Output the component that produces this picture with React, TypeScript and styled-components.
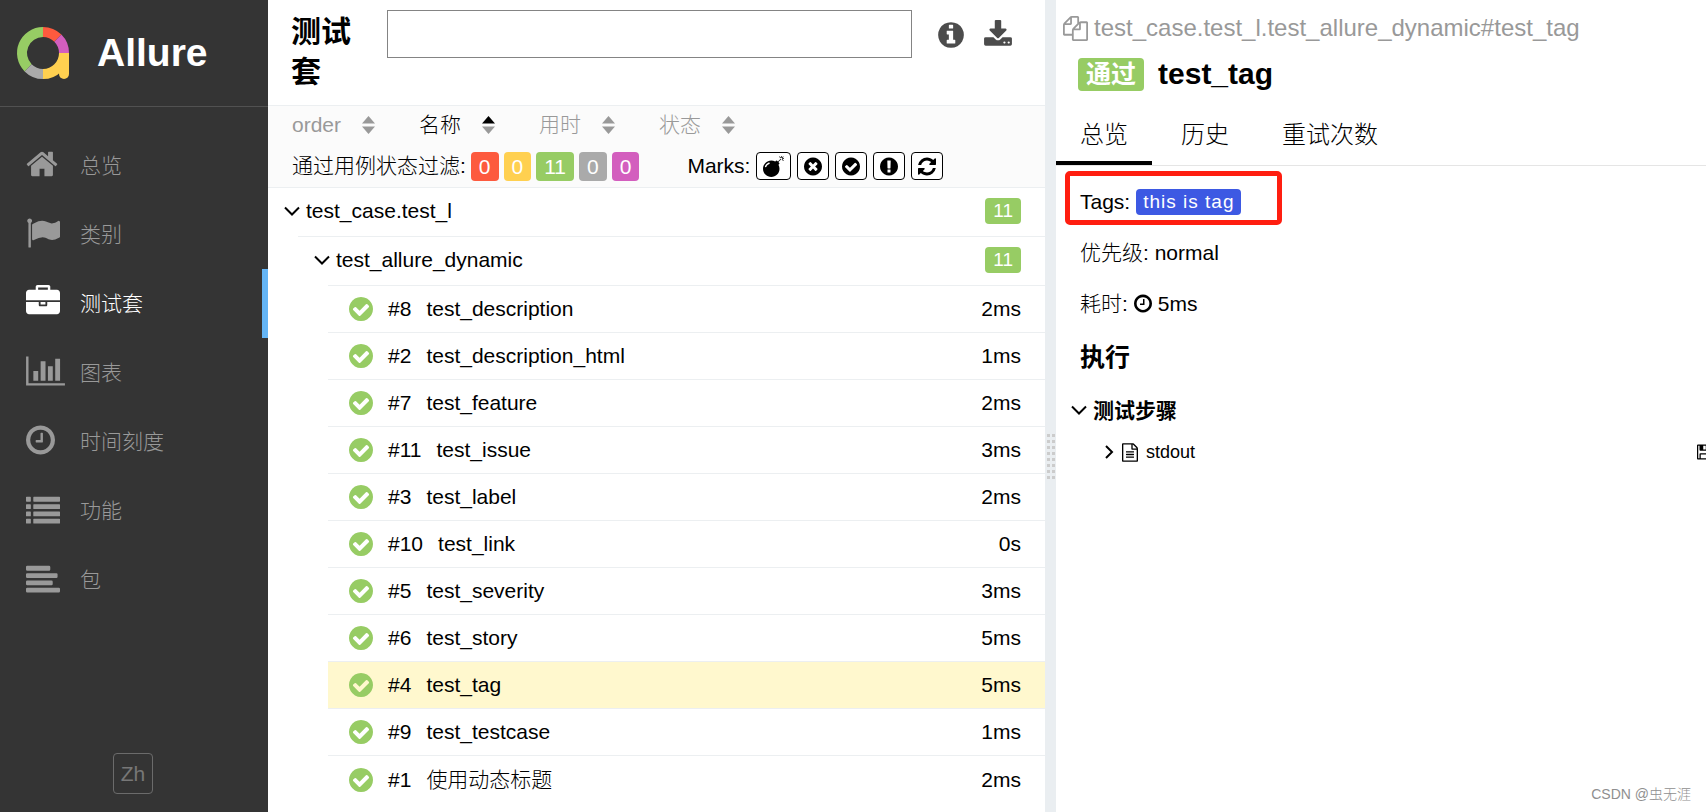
import React, { useState } from "react";
import styled, { createGlobalStyle, css } from "styled-components";

const FONT = '"Liberation Sans", Arial, "Noto Sans CJK SC", sans-serif';

const color = {
  failed: "#fd5a3e",
  broken: "#ffd050",
  passed: "#97cc64",
  skipped: "#aaaaaa",
  unknown: "#d35ebe",
  line: "#eceff1",
  muted: "#999999",
};

const GlobalStyle = createGlobalStyle`
  *, *::before, *::after { box-sizing: border-box; }
  body { margin: 0; font-family: ${FONT}; font-size: 21px; font-weight: 300; line-height: 32px; color: #000; background: #fff; }
  h1, h2, h3, p, ul { margin: 0; padding: 0; }
  ul { list-style: none; }
  a { color: inherit; text-decoration: none; }
  button { font: inherit; color: inherit; background: none; border: 0; padding: 0; cursor: pointer; }
`;

/* ---------- icons ---------- */

const DISC =
  "M1664 896q0 209-103 385.5t-279.5 279.5-385.5 103-385.5-103-279.5-279.5-103-385.5 103-385.5 279.5-279.5 385.5-103 385.5 103 279.5 279.5 103 385.5z";

type IconName =
  | "home" | "flag" | "briefcase" | "chart" | "clock" | "list" | "align"
  | "check" | "times" | "exclamation" | "info" | "download" | "refresh"
  | "bomb" | "files" | "fileText" | "floppy";

/* Each glyph: left edge and width of its box on a 1792-unit em, then the outline. */
const glyphs: Record<IconName, [number, number, string]> = {
  home: [64, 1664, "M1472 992v480q0 26-19 45t-45 19h-384v-384h-256v384h-384q-26 0-45-19t-19-45v-480q0-1 .5-3t.5-3l575-474 575 474q1 2 1 6zm223-69l-62 74q-8 9-21 11h-3q-13 0-21-7l-692-577-692 577q-12 8-24 7-13-2-21-11l-62-74q-8-10-7-23.5t11-21.5l719-599q32-26 76-26t76 26l244 204v-195q0-14 9-23t23-9h192q14 0 23 9t9 23v408l219 182q10 8 11 21.5t-7 23.5z"],
  flag: [0, 1792, "M320 256q0 72-64 110v1266q0 13-9.5 22.5t-22.5 9.5h-64q-13 0-22.5-9.5t-9.5-22.5v-1266q-64-38-64-110 0-53 37.5-90.5t90.5-37.5 90.5 37.5 37.5 90.5zm1472 64v763q0 25-12.5 38.5t-39.5 27.5q-215 116-369 116-61 0-123.5-22t-108.5-48-115.5-48-142.5-22q-192 0-464 146-17 9-33 9-26 0-45-19t-19-45v-742q0-32 31-55 21-14 79-43 236-120 421-120 107 0 200 29t219 88q38 19 88 19 54 0 117.5-21t110-47 88-47 54.5-21q26 0 45 19t19 45z"],
  briefcase: [0, 1792, "M640 256h512v-128h-512v128zm1152 640v480q0 66-47 113t-113 47h-1472q-66 0-113-47t-47-113v-480h672v160q0 26 19 45t45 19h320q26 0 45-19t19-45v-160h672zm-768 0v128h-256v-128h256zm768-480v384h-1792v-384q0-66 47-113t113-47h352v-160q0-40 28-68t68-28h576q40 0 68 28t28 68v160h352q66 0 113 47t47 113z"],
  chart: [0, 2048, "M640 896v512h-256v-512h256zm384-512v1024h-256v-1024h256zm1024 1152v128h-2048v-1536h128v1408h1920zm-640-896v768h-256v-768h256zm384-384v1152h-256v-1152h256z"],
  clock: [128, 1536, "M1024 544v448q0 14-9 23t-23 9h-320q-14 0-23-9t-9-23v-64q0-14 9-23t23-9h224v-352q0-14 9-23t23-9h64q14 0 23 9t9 23zm416 352q0-148-73-273t-198-198-273-73-273 73-198 198-73 273 73 273 198 198 273 73 273-73 198-198 73-273zm224 0q0 209-103 385.5t-279.5 279.5-385.5 103-385.5-103-279.5-279.5-103-385.5 103-385.5 279.5-279.5 385.5-103 385.5 103 279.5 279.5 103 385.5z"],
  list: [0, 1792, "M32 256h192q32 0 32 32v192q0 32-32 32h-192q-32 0-32-32v-192q0-32 32-32zm384 0h1344q32 0 32 32v192q0 32-32 32h-1344q-32 0-32-32v-192q0-32 32-32zM32 640h192q32 0 32 32v192q0 32-32 32h-192q-32 0-32-32v-192q0-32 32-32zm384 0h1344q32 0 32 32v192q0 32-32 32h-1344q-32 0-32-32v-192q0-32 32-32zM32 1024h192q32 0 32 32v192q0 32-32 32h-192q-32 0-32-32v-192q0-32 32-32zm384 0h1344q32 0 32 32v192q0 32-32 32h-1344q-32 0-32-32v-192q0-32 32-32zM32 1408h192q32 0 32 32v192q0 32-32 32h-192q-32 0-32-32v-192q0-32 32-32zm384 0h1344q32 0 32 32v192q0 32-32 32h-1344q-32 0-32-32v-192q0-32 32-32z"],
  align: [0, 1792, "M64 256h1152q64 0 64 64v128q0 64-64 64h-1152q-64 0-64-64v-128q0-64 64-64zm0 384h1536q64 0 64 64v128q0 64-64 64h-1536q-64 0-64-64v-128q0-64 64-64zm0 384h1280q64 0 64 64v128q0 64-64 64h-1280q-64 0-64-64v-128q0-64 64-64zm0 384h1664q64 0 64 64v128q0 64-64 64h-1664q-64 0-64-64v-128q0-64 64-64z"],
  check: [128, 1536, "M1412 734q0-28-18-46l-91-90q-19-19-45-19t-45 19l-408 407-226-226q-19-19-45-19t-45 19l-91 90q-18 18-18 46 0 27 18 45l362 362q19 19 45 19 27 0 46-19l543-543q18-18 18-45z" + DISC],
  times: [128, 1536, "M1277 1122q0-26-19-45l-181-181 181-181q19-19 19-45 0-27-19-46l-90-90q-19-19-46-19-26 0-45 19l-181 181-181-181q-19-19-45-19-27 0-46 19l-90 90q-19 19-19 46 0 26 19 45l181 181-181 181q-19 19-19 45 0 27 19 46l90 90q19 19 46 19 26 0 45-19l181-181 181 181q19 19 45 19 27 0 46-19l90-90q19-19 19-46z" + DISC],
  exclamation: [128, 1536, "M896 128q209 0 385.5 103t279.5 279.5 103 385.5-103 385.5-279.5 279.5-385.5 103-385.5-103-279.5-279.5-103-385.5 103-385.5 279.5-279.5 385.5-103zm128 1247v-190q0-14-9-23.5t-22-9.5h-192q-13 0-23 10t-10 23v190q0 13 10 23t23 10h192q13 0 22-9.5t9-23.5zm-2-344l18-621q0-12-10-18-10-8-24-8h-220q-14 0-24 8-10 6-10 18l17 621q0 10 10 17.5t24 7.5h185q14 0 23.5-7.5t10.5-17.5z"],
  info: [128, 1536, "M1152 1376v-160q0-14-9-23t-23-9h-96v-512q0-14-9-23t-23-9h-320q-14 0-23 9t-9 23v160q0 14 9 23t23 9h96v320h-96q-14 0-23 9t-9 23v160q0 14 9 23t23 9h448q14 0 23-9t9-23zm-128-896v-160q0-14-9-23t-23-9h-192q-14 0-23 9t-9 23v160q0 14 9 23t23 9h192q14 0 23-9t9-23z" + DISC],
  download: [64, 1664, "M1344 1344q0-26-19-45t-45-19-45 19-19 45 19 45 45 19 45-19 19-45zm256 0q0-26-19-45t-45-19-45 19-19 45 19 45 45 19 45-19 19-45zm128-224v320q0 40-28 68t-68 28h-1472q-40 0-68-28t-28-68v-320q0-40 28-68t68-28h465l135 136q58 56 136 56t136-56l136-136h464q40 0 68 28t28 68zm-325-569q17 41-14 70l-448 448q-18 19-45 19t-45-19l-448-448q-31-29-14-70 17-39 59-39h256v-448q0-26 19-45t45-19h256q26 0 45 19t19 45v448h256q42 0 59 39z"],
  refresh: [128, 1536, "M1639 1056q0 5-1 7-64 268-268 434.5t-478 166.5q-146 0-282.5-55t-243.5-157l-129 129q-19 19-45 19t-45-19-19-45v-448q0-26 19-45t45-19h448q26 0 45 19t19 45-19 45l-137 137q71 66 161 102t187 36q134 0 250-65t186-179q11-17 53-117 8-23 30-23h192q13 0 22.5 9.5t9.5 22.5zm25-800v448q0 26-19 45t-45 19h-448q-26 0-45-19t-19-45 19-45l138-138q-148-137-349-137-134 0-250 65t-186 179q-11 17-53 117-8 23-30 23h-199q-13 0-22.5-9.5t-9.5-22.5v-7q65-268 270-434.5t480-166.5q146 0 284 55.5t245 156.5l130-129q19-19 45-19t45 19 19 45z"],
  bomb: [0, 1792, "M571 589q-10-25-34-35t-49 0q-108 44-191 127t-127 191q-10 25 0 49t35 34q13 5 24 5 42 0 60-40 34-84 98.5-148.5t148.5-98.5q25-11 35-35t0-49zm942-356l46 46-244 243 68 68q19 19 19 45.5t-19 45.5l-64 64q89 161 89 343 0 143-55.5 273.5t-150 225-225 150-273.5 55.5-273.5-55.5-225-150-150-225-55.5-273.5 55.5-273.5 150-225 225-150 273.5-55.5q182 0 343 89l64-64q19-19 45.5-19t45.5 19l68 68zm8-56q-10 10-22 10-13 0-23-10l-91-90q-9-10-9-23t9-23q10-9 23-9t23 9l90 91q10 9 10 22.5t-10 22.5zm230 230q-11 9-23 9t-23-9l-90-91q-10-9-10-22.5t10-22.5q9-10 22.5-10t22.5 10l91 90q9 10 9 23t-9 23zm41-183q0 14-9 23t-23 9h-96q-14 0-23-9t-9-23 9-23 23-9h96q14 0 23 9t9 23zm-192-192v96q0 14-9 23t-23 9-23-9-9-23v-96q0-14 9-23t23-9 23 9 9 23zm151 55l-91 90q-10 10-22 10-13 0-23-10-10-9-10-22.5t10-22.5l90-91q10-9 23-9t23 9q9 10 9 23t-9 23z"],
  files: [0, 1792, "M1696 384q40 0 68 28t28 68v1216q0 40-28 68t-68 28h-960q-40 0-68-28t-28-68v-288h-544q-40 0-68-28t-28-68v-672q0-40 20-88t48-76l408-408q28-28 76-48t88-20h416q40 0 68 28t28 68v328q68-40 128-40h416zm-544 213l-299 299h299v-299zm-640-384l-299 299h299v-299zm196 647l316-316v-416h-384v416q0 40-28 68t-68 28h-416v640h512v-256q0-40 20-88t48-76zm956 804v-1152h-384v416q0 40-28 68t-68 28h-416v640h896z"],
  fileText: [128, 1536, "M1596 380q28 28 48 76t20 88v1152q0 40-28 68t-68 28h-1344q-40 0-68-28t-28-68v-1600q0-40 28-68t68-28h896q40 0 88 20t76 48zm-444-244v376h376q-10-29-22-41l-313-313q-12-12-41-22zm384 1528v-1024h-416q-40 0-68-28t-28-68v-416h-768v1536h1280zm-1024-864q0-14 9-23t23-9h704q14 0 23 9t9 23v64q0 14-9 23t-23 9h-704q-14 0-23-9t-9-23v-64zm736 224q14 0 23 9t9 23v64q0 14-9 23t-23 9h-704q-14 0-23-9t-9-23v-64q0-14 9-23t23-9h704zm0 256q14 0 23 9t9 23v64q0 14-9 23t-23 9h-704q-14 0-23-9t-9-23v-64q0-14 9-23t23-9h704z"],
  floppy: [128, 1536, "M512 1536h768v-384h-768v384zm896 0h128v-896q0-14-10-38.5t-20-34.5l-281-281q-10-10-34-20t-39-10v416q0 40-28 68t-68 28h-576q-40 0-68-28t-28-68v-416h-128v1280h128v-416q0-40 28-68t68-28h832q40 0 68 28t28 68v416zm-384-928v-320q0-13-9.5-22.5t-22.5-9.5h-192q-13 0-22.5 9.5t-9.5 22.5v320q0 13 9.5 22.5t22.5 9.5h192q13 0 22.5-9.5t9.5-22.5zm640 32v928q0 40-28 68t-68 28h-1344q-40 0-68-28t-28-68v-1344q0-40 28-68t68-28h928q40 0 88 20t76 48l280 280q28 28 48 76t20 88z"],
};

const Svg = styled.svg`
  display: block;
  flex: none;
  overflow: visible;
`;

function Icon({ name, size, fill = "currentColor" }: { name: IconName; size: number; fill?: string }) {
  const [left, width, d] = glyphs[name];
  return (
    <Svg width={Math.round((size * width) / 1792)} height={size} viewBox={`${left} 0 ${width} 1792`} aria-hidden="true">
      <path d={d} fill={fill} fillRule={name === "check" || name === "times" || name === "info" ? "evenodd" : "nonzero"} />
    </Svg>
  );
}

function Chevron({ open = true }: { open?: boolean }) {
  return open ? (
    <Svg width="16" height="10" viewBox="0 0 16 10" aria-hidden="true">
      <path d="M1 1.5l7 7 7-7" fill="none" stroke="currentColor" strokeWidth="2" />
    </Svg>
  ) : (
    <Svg width="9" height="14" viewBox="0 0 9 14" aria-hidden="true">
      <path d="M1 1l6 6-6 6" fill="none" stroke="currentColor" strokeWidth="2" />
    </Svg>
  );
}

function SortArrows({ asc }: { asc?: boolean }) {
  return (
    <Svg width="13" height="18" viewBox="0 0 13 18" aria-hidden="true">
      <path d="M6.5 0L13 7.5H0z" fill={asc ? "#000" : color.muted} />
      <path d="M0 10.5h13L6.5 18z" fill={color.muted} />
    </Svg>
  );
}

function Logo() {
  const arc = { fill: "none", strokeWidth: 10 };
  return (
    <Svg width="52" height="52" viewBox="0 0 52 52" aria-hidden="true">
      <path d="M11.15 40.85A21 21 0 0 1 26 5" stroke={color.passed} {...arc} />
      <path d="M26 5A21 21 0 0 1 40.85 11.15" stroke={color.failed} {...arc} />
      <path d="M40.85 11.15A21 21 0 0 1 47 26" stroke={color.unknown} {...arc} />
      <path d="M26 47A21 21 0 0 1 11.15 40.85" stroke={color.skipped} {...arc} />
      <path d="M47 26A21 21 0 0 1 26 47" stroke={color.broken} {...arc} />
      <path d="M42 26h10v21a5 5 0 0 1-10 0z" fill={color.broken} />
    </Svg>
  );
}

/* ---------- layout ---------- */

const Page = styled.div`
  display: grid;
  grid-template-columns: 268px minmax(0, 777fr) 11px minmax(0, 650fr);
  height: 100vh;
  overflow: hidden;
`;

/* ---------- side navigation ---------- */

const Sidebar = styled.aside`
  display: flex;
  flex-direction: column;
  background: #343434;
  color: ${color.muted};
`;

const Brand = styled.a`
  display: flex;
  align-items: center;
  gap: 28px;
  height: 107px;
  padding: 0 17px;
  border-bottom: 1px solid #515151;
  color: #fff;
  font-size: 39px;
  font-weight: bold;
`;

const NavList = styled.ul`
  flex: 1;
  padding-top: 24px;
`;

const NavLink = styled.a<{ $active?: boolean }>`
  display: flex;
  align-items: center;
  height: 69px;
  padding-left: 26px;
  border-right: 6px solid transparent;
  ${(p) =>
    p.$active &&
    css`
      color: #fff;
      border-right-color: #64b5f6;
    `}
`;

const NavIcon = styled.span`
  flex: 0 0 54px;
  padding-bottom: 4px;
`;

const SidebarFooter = styled.div`
  display: flex;
  justify-content: center;
  padding: 0 2px 18px 0;
`;

const LanguageButton = styled.button`
  width: 40px;
  height: 41px;
  border: 1px solid #6b6b6b;
  border-radius: 4px;
  color: #777;
`;

/* ---------- suites panel ---------- */

const Suites = styled.main`
  overflow: hidden;
`;

const SuitesHeader = styled.header`
  display: flex;
  align-items: flex-start;
  gap: 16px;
  min-height: 105px;
  padding: 10px 33px 0 23px;
`;

const SuitesTitle = styled.h1`
  flex: 0 0 80px;
  padding-top: 2px;
  font-size: 30px;
  line-height: 40px;
`;

const Search = styled.input`
  flex: 1;
  min-width: 0;
  height: 48px;
  padding: 0 12px;
  border: 1px solid #848484;
  border-radius: 0;
  font: inherit;
`;

const HeaderActions = styled.div`
  display: flex;
  gap: 20px;
  padding: 10px 0 0 10px;
  color: #4c4c4c;
`;

const Controls = styled.section`
  border: solid ${color.line};
  border-width: 1px 0;
  background: #fbfbfb;
  padding: 2px 24px 1px;
`;

const Sorters = styled.div`
  display: flex;
  gap: 44px;
`;

const Sorter = styled.button<{ $active?: boolean }>`
  display: flex;
  align-items: center;
  gap: 21px;
  height: 34px;
  color: ${(p) => (p.$active ? "#000" : color.muted)};
`;

const Filters = styled.div`
  display: flex;
  align-items: center;
  height: 40px;
  margin-top: 4px;
`;

const FilterGroup = styled.div<{ $end?: boolean }>`
  display: flex;
  align-items: center;
  gap: ${(p) => (p.$end ? "6px" : "5px")};
  margin-left: ${(p) => (p.$end ? "48px" : "0")};
  white-space: nowrap;
`;

const Status = styled.button<{ $tone: string }>`
  height: 29px;
  padding: 0 8px;
  border-radius: 4px;
  background: ${(p) => p.$tone};
  color: #fff;
  line-height: 29px;
`;

const Mark = styled.button`
  display: flex;
  align-items: center;
  justify-content: center;
  height: 28px;
  padding: 0 6px;
  border: 1px solid #000;
  border-radius: 4px;
  background: #fff;
`;

const GroupRow = styled.button`
  display: flex;
  align-items: center;
  gap: 6px;
  width: 100%;
  height: 48px;
  padding: 0 24px 2px 16px;
  text-align: left;
`;

const Count = styled.span`
  margin-left: auto;
  padding: 0 8px;
  border-radius: 4px;
  background: ${color.passed};
  color: #fff;
  font-size: 19px;
  line-height: 26px;
`;

const Nested = styled.div`
  margin-left: 30px;
  border-top: 1px solid ${color.line};
`;

const CaseRow = styled.a<{ $selected?: boolean }>`
  display: flex;
  align-items: center;
  gap: 15px;
  height: 47px;
  padding: 0 24px 0 21px;
  border-bottom: 1px solid ${color.line};
  background: ${(p) => (p.$selected ? "#fff8ce" : "transparent")};
  li:last-child > & {
    border-bottom: 0;
  }
`;

const Duration = styled.span`
  margin-left: auto;
`;

/* ---------- splitter ---------- */

const Splitter = styled.div`
  display: flex;
  align-items: center;
  justify-content: center;
  padding-top: 100px;
  background: #eaeef1;
`;

function Grip() {
  return (
    <Svg width="8" height="45" viewBox="0 0 8 45" aria-hidden="true">
      {[0, 6, 12, 18, 24, 30, 36, 42].map((y) => (
        <path key={y} d={`M0 ${y}h3v3h-3zM5 ${y}h3v3h-3z`} fill="#ccc" />
      ))}
    </Svg>
  );
}

/* ---------- details panel ---------- */

const Details = styled.section`
  display: flex;
  flex-direction: column;
  overflow: hidden;
`;

const FullName = styled.div`
  display: flex;
  align-items: center;
  gap: 6px;
  padding: 12px 0 0 7px;
  color: ${color.muted};
  font-size: 24px;
`;

const CaseTitle = styled.h2`
  display: flex;
  align-items: center;
  gap: 14px;
  padding: 10px 22px 0;
  font-size: 30px;
  line-height: 40px;
`;

const Verdict = styled.span`
  padding: 0 8px;
  border-radius: 4px;
  background: ${color.passed};
  color: #fff;
  font-size: 25px;
  line-height: 33px;
`;

const Tabs = styled.div`
  display: flex;
  gap: 5px;
  margin-top: 11px;
  border-bottom: 1px solid #e5e5e5;
`;

const Tab = styled.button<{ $active?: boolean }>`
  height: 60px;
  padding: 4px 24px 0;
  border-bottom: 4px solid ${(p) => (p.$active ? "#000" : "transparent")};
  font-size: 24px;
`;

const Highlight = styled.div`
  display: flex;
  align-items: center;
  gap: 6px;
  align-self: flex-start;
  width: 217px;
  height: 54px;
  margin: 5px 0 0 9px;
  padding: 8px 0 0 10px;
  border: 5px solid #ff1e10;
  border-radius: 5px;
`;

const Tag = styled.span`
  padding: 0 7px;
  border-radius: 4px;
  background: #3d59e3;
  color: #fff;
  font-size: 19px;
  line-height: 26px;
  letter-spacing: 1px;
`;

const Property = styled.p`
  display: flex;
  align-items: center;
  gap: 6px;
  padding-left: 24px;
  line-height: 51px;
`;

const Properties = styled.div`
  padding-top: 2px;
`;

const SectionTitle = styled.h3`
  padding: 12px 24px 7px;
  font-size: 25px;
`;

const StepRow = styled.button`
  display: flex;
  align-items: center;
  gap: 6px;
  height: 40px;
  margin: 11px 0 0 15px;
  font-weight: bold;
  svg {
    margin-bottom: 3px;
  }
`;

/* The row runs past the panel's edge, so its save button is cut off. */
const Attachment = styled.div`
  display: flex;
  align-items: center;
  justify-content: space-between;
  height: 42px;
  margin: 0 -6px 0 49px;
  font-size: 18px;
`;

const AttachmentToggle = styled.button`
  display: flex;
  align-items: center;
  gap: 8px;
`;

const Watermark = styled.div`
  margin-top: auto;
  padding: 0 15px 6px;
  color: #8f8f8f;
  font-size: 14px;
  line-height: 24px;
  text-align: right;
`;

/* ---------- data ---------- */

const nav: { icon: IconName; label: string }[] = [
  { icon: "home", label: "总览" },
  { icon: "flag", label: "类别" },
  { icon: "briefcase", label: "测试套" },
  { icon: "chart", label: "图表" },
  { icon: "clock", label: "时间刻度" },
  { icon: "list", label: "功能" },
  { icon: "align", label: "包" },
];

const sorters = ["order", "名称", "用时", "状态"];

const statuses: [string, number][] = [
  ["failed", 0],
  ["broken", 0],
  ["passed", 11],
  ["skipped", 0],
  ["unknown", 0],
];

const marks: [IconName, string][] = [
  ["bomb", "Flaky"],
  ["times", "New failed"],
  ["check", "New passed"],
  ["exclamation", "New broken"],
  ["refresh", "Retries"],
];

const cases: [number, string, string][] = [
  [8, "test_description", "2ms"],
  [2, "test_description_html", "1ms"],
  [7, "test_feature", "2ms"],
  [11, "test_issue", "3ms"],
  [3, "test_label", "2ms"],
  [10, "test_link", "0s"],
  [5, "test_severity", "3ms"],
  [6, "test_story", "5ms"],
  [4, "test_tag", "5ms"],
  [9, "test_testcase", "1ms"],
  [1, "使用动态标题", "2ms"],
];

const tabs = ["总览", "历史", "重试次数"];

export default function App() {
  const [selected, setSelected] = useState(4);
  const [tab, setTab] = useState(tabs[0]);
  const [sort, setSort] = useState("名称");

  return (
    <Page>
      <GlobalStyle />
      <Sidebar>
        <Brand href="#">
          <Logo />
          <span>Allure</span>
        </Brand>
        <NavList>
          {nav.map(({ icon, label }) => (
            <li key={label}>
              <NavLink href="#" $active={label === "测试套"}>
                <NavIcon>
                  <Icon name={icon} size={34} />
                </NavIcon>
                <span>{label}</span>
              </NavLink>
            </li>
          ))}
        </NavList>
        <SidebarFooter>
          <LanguageButton>Zh</LanguageButton>
        </SidebarFooter>
      </Sidebar>

      <Suites>
        <SuitesHeader>
          <SuitesTitle>测试套</SuitesTitle>
          <Search type="text" aria-label="搜索" />
          <HeaderActions>
            <button aria-label="Info">
              <Icon name="info" size={30} />
            </button>
            <button aria-label="Download">
              <Icon name="download" size={30} />
            </button>
          </HeaderActions>
        </SuitesHeader>

        <Controls>
          <Sorters>
            {sorters.map((name) => (
              <Sorter key={name} $active={name === sort} onClick={() => setSort(name)}>
                <span>{name}</span>
                <SortArrows asc={name === sort} />
              </Sorter>
            ))}
          </Sorters>
          <Filters>
            <FilterGroup>
              <span>通过用例状态过滤:</span>
              {statuses.map(([status, n]) => (
                <Status key={status} $tone={color[status as keyof typeof color]} aria-label={`${status} ${n}`}>
                  {n}
                </Status>
              ))}
            </FilterGroup>
            <FilterGroup $end>
              <span>Marks:</span>
              {marks.map(([icon, label]) => (
                <Mark key={icon} aria-label={label}>
                  <Icon name={icon} size={21} />
                </Mark>
              ))}
            </FilterGroup>
          </Filters>
        </Controls>

        <GroupRow>
          <Chevron />
          <span>test_case.test_l</span>
          <Count>11</Count>
        </GroupRow>
        <Nested>
          <GroupRow>
            <Chevron />
            <span>test_allure_dynamic</span>
            <Count>11</Count>
          </GroupRow>
          <Nested as="ul">
            {cases.map(([n, name, time]) => (
              <li key={n}>
                <CaseRow href="#" $selected={n === selected} onClick={() => setSelected(n)}>
                  <Icon name="check" size={28} fill={color.passed} />
                  <span>#{n}</span>
                  <span>{name}</span>
                  <Duration>{time}</Duration>
                </CaseRow>
              </li>
            ))}
          </Nested>
        </Nested>
      </Suites>

      <Splitter>
        <Grip />
      </Splitter>

      <Details>
        <FullName>
          <Icon name="files" size={25} />
          <span>test_case.test_l.test_allure_dynamic#test_tag</span>
        </FullName>
        <CaseTitle>
          <Verdict>通过</Verdict>
          <span>test_tag</span>
        </CaseTitle>
        <Tabs role="tablist">
          {tabs.map((name) => (
            <Tab key={name} role="tab" aria-selected={name === tab} $active={name === tab} onClick={() => setTab(name)}>
              {name}
            </Tab>
          ))}
        </Tabs>
        <Highlight>
          <span>Tags:</span>
          <Tag>this is tag</Tag>
        </Highlight>
        <Properties>
          <Property>优先级: normal</Property>
          <Property>
            <span>耗时:</span>
            <Icon name="clock" size={21} />
            <span>5ms</span>
          </Property>
        </Properties>
        <SectionTitle>执行</SectionTitle>
        <StepRow>
          <Chevron />
          <span>测试步骤</span>
        </StepRow>
        <Attachment>
          <AttachmentToggle>
            <Chevron open={false} />
            <Icon name="fileText" size={19} />
            <span>stdout</span>
          </AttachmentToggle>
          <button aria-label="Save">
            <Icon name="floppy" size={18} />
          </button>
        </Attachment>
        <Watermark>CSDN @虫无涯</Watermark>
      </Details>
    </Page>
  );
}
